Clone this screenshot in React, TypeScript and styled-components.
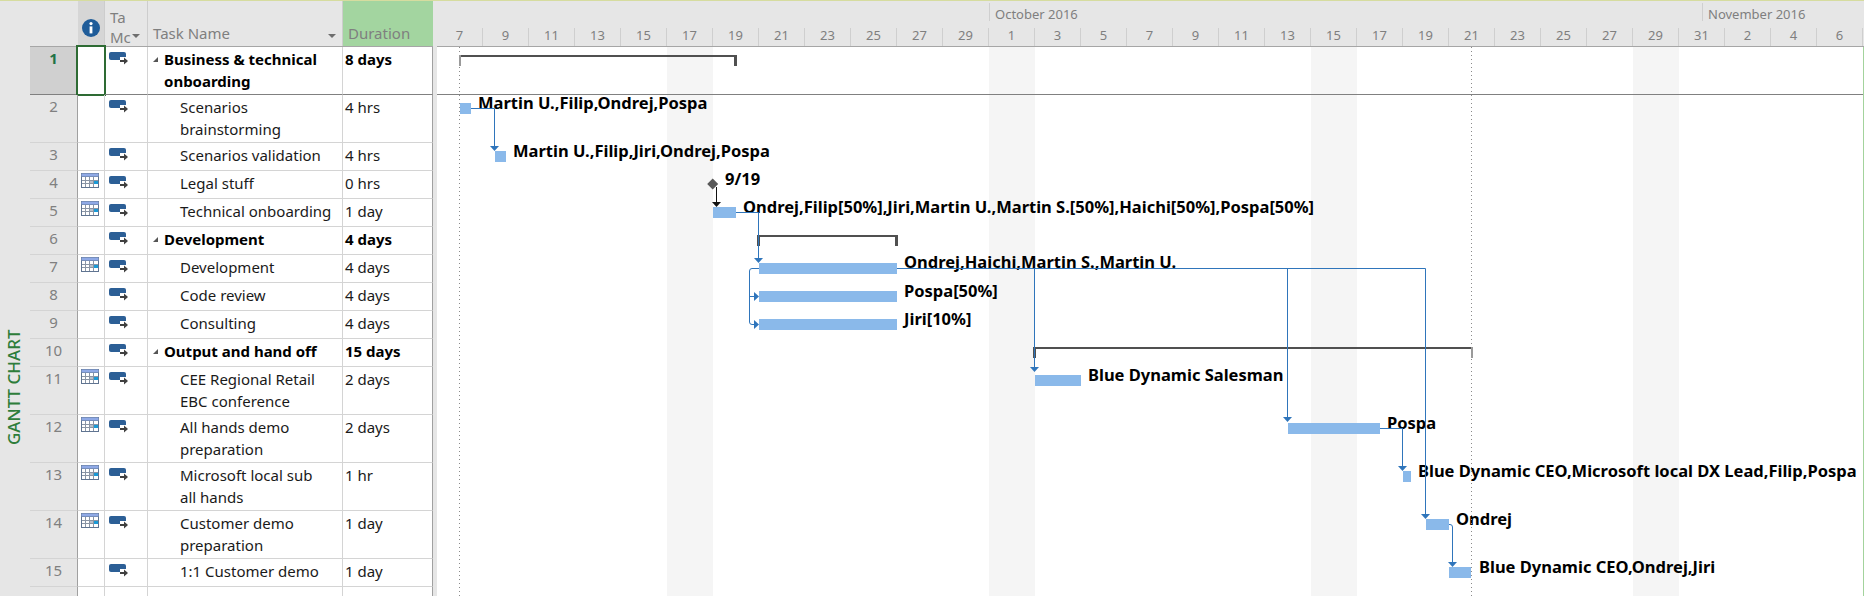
import styled, { createGlobalStyle } from 'styled-components';

const FONT = `"Noto Sans", "Open Sans", sans-serif`;
const X0 = 437;
const Y0 = 47;

type Task = { id: number; name: string; dur: string; cal?: boolean; summary?: boolean; tall?: boolean };

const tasks: Task[] = [
    { id: 1, name: 'Business & technical\nonboarding', dur: '8 days', summary: true, tall: true },
    { id: 2, name: 'Scenarios\nbrainstorming', dur: '4 hrs', tall: true },
    { id: 3, name: 'Scenarios validation', dur: '4 hrs' },
    { id: 4, name: 'Legal stuff', dur: '0 hrs', cal: true },
    { id: 5, name: 'Technical onboarding', dur: '1 day', cal: true },
    { id: 6, name: 'Development', dur: '4 days', summary: true },
    { id: 7, name: 'Development', dur: '4 days', cal: true },
    { id: 8, name: 'Code review', dur: '4 days' },
    { id: 9, name: 'Consulting', dur: '4 days' },
    { id: 10, name: 'Output and hand off', dur: '15 days', summary: true },
    { id: 11, name: 'CEE Regional Retail\nEBC conference', dur: '2 days', cal: true, tall: true },
    { id: 12, name: 'All hands demo\npreparation', dur: '2 days', cal: true, tall: true },
    { id: 13, name: 'Microsoft local sub\nall hands', dur: '1 hr', cal: true, tall: true },
    { id: 14, name: 'Customer demo\npreparation', dur: '1 day', cal: true, tall: true },
    { id: 15, name: '1:1 Customer demo', dur: '1 day' },
];

const days = [7, 9, 11, 13, 15, 17, 19, 21, 23, 25, 27, 29, 1, 3, 5, 7, 9, 11, 13, 15, 17, 19, 21, 23, 25, 27, 29, 31, 2, 4, 6];

// page coordinates, the svg viewBox is shifted to match
const bars = [
    [460, 103, 11], [495, 151, 11], [713, 207, 23], [759, 263, 138], [759, 291, 138], [759, 319, 138],
    [1035, 375, 46], [1288, 423, 92], [1403, 471, 8], [1426, 519, 23], [1449, 567, 22],
];

const labels = [
    { x: 478, y: 103, text: 'Martin U.,Filip,Ondrej,Pospa' },
    { x: 513, y: 151, text: 'Martin U.,Filip,Jiri,Ondrej,Pospa' },
    { x: 725, y: 179, text: '9/19' },
    { x: 743, y: 207, text: 'Ondrej,Filip[50%],Jiri,Martin U.,Martin S.[50%],Haichi[50%],Pospa[50%]' },
    { x: 904, y: 262, text: 'Ondrej,Haichi,Martin S.,Martin U.' },
    { x: 904, y: 291, text: 'Pospa[50%]' },
    { x: 904, y: 319, text: 'Jiri[10%]' },
    { x: 1088, y: 375, text: 'Blue Dynamic Salesman' },
    { x: 1387, y: 423, text: 'Pospa' },
    { x: 1418, y: 471, text: 'Blue Dynamic CEO,Microsoft local DX Lead,Filip,Pospa' },
    { x: 1456, y: 519, text: 'Ondrej' },
    { x: 1479, y: 567, text: 'Blue Dynamic CEO,Ondrej,Jiri' },
];

const GlobalStyle = createGlobalStyle`
    html, body {
        margin: 0;
        background: #fff;
        overflow: hidden;
    }
`;

const Page = styled.div`
    width: 1864px;
    height: 596px;
    overflow: hidden;
    font-family: ${FONT};
    border-top: 1px solid #d6dc9f;
    box-sizing: border-box;
    display: flex;
`;

const Rail = styled.div`
    width: 30px;
    height: 595px;
    background: #e6e6e6;
    padding: 327px 3px 0 0;
    box-sizing: border-box;
    display: flex;
    justify-content: center;
`;

const RailText = styled.div`
    writing-mode: vertical-rl;
    transform: rotate(180deg);
    height: 118px;
    text-align: center;
    color: #2e7d3a;
    font-size: 17px;
    font-weight: 500;
    line-height: 20px;
    white-space: nowrap;
`;

const Sheet = styled.div`
    width: 403px;
    display: flex;
    flex-direction: column;
`;

const Gutter = styled.div`
    width: 4px;
    background: #e6e6e6;
`;

const Row = styled.div<{ $h: number; $dark?: boolean }>`
    display: grid;
    grid-template-columns: 48px 27px 43px 195px 90px;
    height: ${p => p.$h}px;
    flex: none;
    & > div {
        border-bottom-color: ${p => (p.$dark ? '#808080' : '#d4d4d4')};
    }
`;

const HeadRow = styled(Row)`
    background: #e6e6e6;
    border-bottom: 1px solid #a6a6a6;
    box-sizing: border-box;
`;

const HeadCell = styled.div<{ $bg?: string; $line?: boolean }>`
    position: relative;
    background: ${p => p.$bg || 'transparent'};
    border-right: 1px solid ${p => (p.$line ? '#cdcdcd' : 'transparent')};
    display: flex;
    align-items: flex-end;
    justify-content: space-between;
    padding: 0 6px 2px 5px;
    box-sizing: border-box;
    overflow: hidden;
    color: #7f7f7f;
    font-size: 15px;
    line-height: 22px;
    white-space: nowrap;
`;

const InfoCell = styled(HeadCell)`
    align-items: flex-start;
    justify-content: flex-start;
    padding: 18px 0 0 4px;
`;

const ModeHead = styled(HeadCell)`
    display: block;
    padding: 6px 0 0 5px;
    line-height: 20px;
`;

const ModeCaret = styled.span`
    position: absolute;
    right: 7px;
    bottom: 8px;
    border-left: 4px solid transparent;
    border-right: 4px solid transparent;
    border-top: 4px solid #6e6e6e;
`;

const NameCaret = styled.span`
    margin-bottom: 6px;
    border-left: 4px solid transparent;
    border-right: 4px solid transparent;
    border-top: 4px solid #6e6e6e;
`;

const Cell = styled.div`
    border-right: 1px solid #d4d4d4;
    border-bottom: 1px solid #d4d4d4;
    box-sizing: border-box;
    position: relative;
    font-size: 15px;
    line-height: 22px;
    color: #1a1a1a;
`;

const NumCell = styled(Cell)<{ $sel?: boolean }>`
    background: ${p => (p.$sel ? '#d0d0d0' : '#e6e6e6')};
    border-right-color: #a0a0a0;
    text-align: center;
    color: ${p => (p.$sel ? '#217346' : '#808080')};
    font-weight: ${p => (p.$sel ? 700 : 400)};
`;

const IndCell = styled(Cell)`
    padding: 2px 0 0 3px;
`;

const ModeCell = styled(Cell)`
    padding: 5px 0 0 4px;
`;

const NameCell = styled(Cell)<{ $summary?: boolean }>`
    padding: 1px 0 0 ${p => (p.$summary ? 16 : 32)}px;
    font-weight: ${p => (p.$summary ? 700 : 400)};
    white-space: pre;
    color: ${p => (p.$summary ? '#000' : '#1a1a1a')};
`;

const DurCell = styled(Cell)<{ $summary?: boolean }>`
    padding: 1px 0 0 2px;
    font-weight: ${p => (p.$summary ? 700 : 400)};
    border-right-color: #a0a0a0;
    color: ${p => (p.$summary ? '#000' : '#1a1a1a')};
`;

const Collapse = styled.span`
    position: absolute;
    left: 5px;
    top: 10px;
    width: 0;
    height: 0;
    border-left: 5px solid transparent;
    border-bottom: 5px solid #555;
`;

const SelectBox = styled.div`
    position: absolute;
    left: -2px;
    top: -2px;
    width: 30px;
    height: 51px;
    border: 2px solid #2e6b34;
    box-sizing: border-box;
`;

const Timeline = styled.div`
    width: 1427px;
    display: flex;
    flex-direction: column;
`;

const Scale = styled.div`
    height: 46px;
    flex: none;
    background: #e6e6e6;
    border-bottom: 1px solid #a6a6a6;
    box-sizing: border-box;
    display: flex;
    flex-direction: column;
`;

const Months = styled.div`
    height: 24px;
    display: flex;
    padding: 2px 0 0 552px;
    box-sizing: border-box;
`;

const Month = styled.div<{ $w: number }>`
    width: ${p => p.$w}px;
    height: 18px;
    border-left: 1px solid #cfcfcf;
    padding-left: 5px;
    box-sizing: border-box;
    font-size: 13px;
    line-height: 22px;
    color: #7f7f7f;
`;

const Days = styled.div`
    display: flex;
    flex: 1;
`;

const Day = styled.div`
    width: 46px;
    flex: none;
    box-sizing: border-box;
    border-right: 1px solid #cfcfcf;
    margin-top: 3px;
    text-align: center;
    font-size: 13px;
    line-height: 15px;
    color: #7f7f7f;
`;

const ChartBody = styled.div`
    position: relative;
    flex: 1;
    border-right: 1px solid #a3d39c;
    overflow: hidden;
`;

const Shade = styled.div<{ $x: number }>`
    position: absolute;
    top: 0;
    bottom: 0;
    left: ${p => p.$x - X0}px;
    width: 46px;
    background: #f5f5f5;
`;

const BarLabel = styled.div<{ $x: number; $y: number }>`
    position: absolute;
    left: ${p => p.$x - X0}px;
    top: ${p => p.$y - Y0 - 10}px;
    font-size: 16.5px;
    font-weight: 700;
    line-height: 20px;
    color: #000;
    white-space: nowrap;
`;

const Overlay = styled.svg`
    position: absolute;
    left: 0;
    top: 0;
`;

const InfoIcon = () => (
    <svg width="18" height="18" viewBox="0 0 18 18">
        <circle cx="9" cy="9" r="9" fill="#1f5c99" />
        <circle cx="9" cy="4.6" r="1.6" fill="#fff" />
        <rect x="7.6" y="7.4" width="2.8" height="7" fill="#fff" />
    </svg>
);

const CalendarIcon = () => (
    <svg width="18" height="15" viewBox="0 0 18 15" style={{ display: 'block' }}>
        <rect x="0" y="0" width="18" height="15" fill="#5f7491" />
        <rect x="0.5" y="0.5" width="17" height="3" fill="#8fa9e6" />
        <rect x="1" y="4" width="16" height="10" fill="#fff" />
        {[4, 8, 12].map(x => <rect key={x} x={x} y="4" width="1" height="10" fill="#8a95a5" />)}
        {[7, 10].map(y => <rect key={y} x="1" y={y} width="16" height="1" fill="#8a95a5" />)}
        <rect x="9" y="8" width="3" height="2" fill="#b8bec8" />
        <rect x="13" y="8" width="4" height="3" fill="#1b9ad6" />
    </svg>
);

const ModeIcon = () => (
    <svg width="19" height="13" viewBox="0 0 19 13" style={{ display: 'block' }}>
        <rect x="0" y="0" width="17" height="8" rx="2" fill="#2c5f96" />
        <rect x="11" y="5" width="8" height="8" fill="#fff" />
        <rect x="11" y="8" width="6" height="2" fill="#404040" />
        <polygon points="15,5.5 19,9 15,12.5" fill="#404040" />
    </svg>
);

const Down = ({ x, y, color = '#2f75bb' }: { x: number; y: number; color?: string }) => (
    <polygon points={`${x - 4.5},${y - 5} ${x + 4.5},${y - 5} ${x},${y}`} fill={color} />
);

const Right = ({ x, y }: { x: number; y: number }) => (
    <polygon points={`${x - 5},${y - 4.5} ${x - 5},${y + 4.5} ${x},${y}`} fill="#2f75bb" />
);

const Bracket = ({ x1, x2, y, soft }: { x1: number; x2: number; y: number; soft?: boolean }) => (
    <g fill="#505050">
        <rect x={x1} y={y} width={x2 - x1} height="2" />
        <rect x={soft ? x2 - 2 : x2 - 3} y={y} width={soft ? 2 : 3} height="11" fill={soft ? '#9a9a9a' : '#505050'} />
        <rect x={x1} y={y} width={x1 < 500 ? 2 : 3} height="11" fill={x1 < 500 ? '#9a9a9a' : '#505050'} />
    </g>
);

const ChartDrawing = () => (
    <Overlay width="1426" height="549" viewBox={`${X0} ${Y0} 1426 549`}>
        <line x1="459.5" y1="47" x2="459.5" y2="596" stroke="#8a8a8a" strokeDasharray="1 3" />
        <line x1="1471.5" y1="47" x2="1471.5" y2="596" stroke="#8a8a8a" strokeDasharray="1 3" />
        <rect x="437" y="94" width="1426" height="1" fill="#808080" />

        <Bracket x1={459} x2={737} y={55} />
        <Bracket x1={757} x2={898} y={235} />
        <Bracket x1={1033} x2={1473} y={347} soft />

        {bars.map(([x, y, w]) => <rect key={`${x}-${y}`} x={x} y={y} width={w} height="11" fill="#8ab9ea" />)}

        <polygon points="712.7,178.5 718.2,184 712.7,189.5 707.2,184" fill="#595959" />
        <path d="M716.5 187V203" stroke="#111" fill="none" />
        <Down x={716.5} y={207} color="#111" />

        <g stroke="#2f75bb" fill="none">
            <path d="M471 108.5H494.5V147" />
            <path d="M736 212.5H758.5V258" />
            <path d="M759 268.5H752Q749.5 268.5 749.5 271V322Q749.5 324.5 752 324.5H754" />
            <path d="M749.5 296.5H754" />
            <path d="M897 268.5H1425.5V515" />
            <path d="M1034.5 268.5V367" />
            <path d="M1287.5 268.5V418" />
            <path d="M1380 428.5H1402.5V466" />
            <path d="M1449 524.5H1450Q1452.5 524.5 1452.5 527V562" />
        </g>
        <Down x={494.5} y={151} />
        <Down x={758.5} y={263} />
        <Right x={759} y={296.5} />
        <Right x={759} y={324.5} />
        <Down x={1034.5} y={372} />
        <Down x={1287.5} y={422} />
        <Down x={1402.5} y={471} />
        <Down x={1425.5} y={519} />
        <Down x={1452.5} y={567} />
    </Overlay>
);

const App = () => {
    return (
        <Page>
            <GlobalStyle />
            <Rail><RailText>GANTT CHART</RailText></Rail>
            <Sheet>
                <HeadRow $h={46}>
                    <HeadCell />
                    <InfoCell $bg="#d6d6d6" $line><InfoIcon /></InfoCell>
                    <ModeHead $line>
                        <div>Ta</div>
                        <div>Mc</div>
                        <ModeCaret />
                    </ModeHead>
                    <HeadCell $line>Task Name<NameCaret /></HeadCell>
                    <HeadCell $bg="#a3d5a0">Duration</HeadCell>
                </HeadRow>
                {tasks.map(t => (
                    <Row key={t.id} $h={t.tall ? 48 : 28} $dark={t.id === 1}>
                        <NumCell $sel={t.id === 1}>{t.id}</NumCell>
                        <IndCell>
                            {t.cal && <CalendarIcon />}
                            {t.id === 1 && <SelectBox />}
                        </IndCell>
                        <ModeCell><ModeIcon /></ModeCell>
                        <NameCell $summary={t.summary}>
                            {t.summary && <Collapse />}
                            {t.name}
                        </NameCell>
                        <DurCell $summary={t.summary}>{t.dur}</DurCell>
                    </Row>
                ))}
                <Row $h={28}>
                    <NumCell />
                    <Cell />
                    <Cell />
                    <Cell />
                    <DurCell />
                </Row>
            </Sheet>
            <Gutter />
            <Timeline>
                <Scale>
                    <Months>
                        <Month $w={713}>October 2016</Month>
                        <Month $w={162}>November 2016</Month>
                    </Months>
                    <Days>{days.map((d, i) => <Day key={i}>{d}</Day>)}</Days>
                </Scale>
                <ChartBody>
                    {[666.7, 989, 1310.8, 1633].map(x => <Shade key={x} $x={x} />)}
                    {labels.map(l => <BarLabel key={l.text} $x={l.x} $y={l.y}>{l.text}</BarLabel>)}
                    <ChartDrawing />
                </ChartBody>
            </Timeline>
        </Page>
    );
};

export default App;
